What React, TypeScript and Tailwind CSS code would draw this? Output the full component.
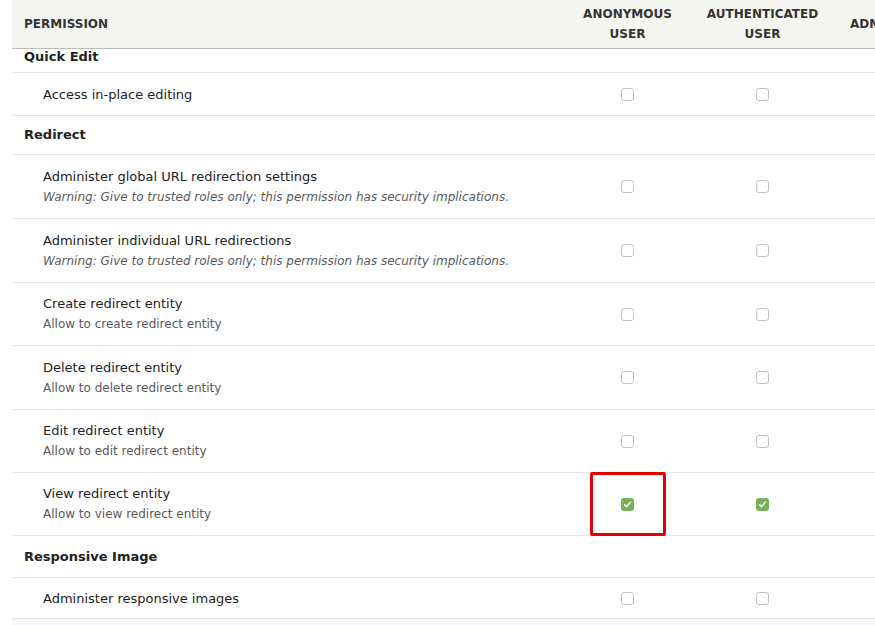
import React from "react";

type Row =
  | { kind: "module"; name: string; h: string; clip?: boolean }
  | { kind: "perm"; title: string; desc?: string; warn?: boolean; h: string; checked?: boolean };

const rows: Row[] = [
  { kind: "module", name: "Quick Edit", h: "h-[24px]", clip: true },
  { kind: "perm", title: "Access in-place editing", h: "h-[43px]" },
  { kind: "module", name: "Redirect", h: "h-[39px]" },
  {
    kind: "perm",
    title: "Administer global URL redirection settings",
    desc: "Warning: Give to trusted roles only; this permission has security implications.",
    warn: true,
    h: "h-[64px]",
  },
  {
    kind: "perm",
    title: "Administer individual URL redirections",
    desc: "Warning: Give to trusted roles only; this permission has security implications.",
    warn: true,
    h: "h-[64px]",
  },
  { kind: "perm", title: "Create redirect entity", desc: "Allow to create redirect entity", h: "h-[63px]" },
  { kind: "perm", title: "Delete redirect entity", desc: "Allow to delete redirect entity", h: "h-[64px]" },
  { kind: "perm", title: "Edit redirect entity", desc: "Allow to edit redirect entity", h: "h-[63px]" },
  { kind: "perm", title: "View redirect entity", desc: "Allow to view redirect entity", h: "h-[63px]", checked: true },
  { kind: "module", name: "Responsive Image", h: "h-[42px]" },
  { kind: "perm", title: "Administer responsive images", h: "h-[41px]" },
];

function Checkbox({ checked }: { checked?: boolean }) {
  if (checked) {
    return (
      <span className="flex h-[13px] w-[13px] items-center justify-center rounded-[3px] bg-[#77b259]">
        <svg width="9" height="9" viewBox="0 0 10 10" fill="none">
          <path d="M1.8 5.2 L4 7.4 L8.2 2.4" stroke="#fff" strokeWidth="1.6" strokeLinecap="round" strokeLinejoin="round" />
        </svg>
      </span>
    );
  }
  return <span className="block h-[13px] w-[13px] rounded-[3px] border border-[#c2c2c2] bg-white" />;
}

export default function App() {
  return (
    <div
      className="relative h-[625px] w-[875px] overflow-hidden bg-white text-[13px] text-[#333]"
      style={{ fontFamily: '"DejaVu Sans", Verdana, sans-serif' }}
    >
      <div className="ml-3 w-[1000px]">
        {/* header */}
        <div className="grid h-[49px] grid-cols-[548px_135px_135px_135px] items-center border-b border-[#bfbfba] bg-[#f5f5f2] text-[12px] font-bold uppercase leading-[20px] text-[#333]">
          <div className="pl-3">Permission</div>
          <div className="text-center">Anonymous<br />user</div>
          <div className="text-center">Authenticated<br />user</div>
          <div className="pl-5">Administrator</div>
        </div>

        {rows.map((row, i) =>
          row.kind === "module" ? (
            <div
              key={i}
              className={`flex overflow-hidden border-b border-[#e6e4df] pl-3 font-bold leading-[20px] text-[#222] ${row.h} ${
                row.clip ? "items-end pb-[5px]" : "items-center"
              }`}
            >
              {row.name}
            </div>
          ) : (
            <div key={i} className={`grid grid-cols-[548px_135px_135px_135px] items-center border-b border-[#e6e4df] ${row.h}`}>
              <div className="pl-[31px] leading-[21px]">
                <div className="text-[#222]">{row.title}</div>
                {row.desc && (
                  <div className={`text-[12px] text-[#595959] ${row.warn ? "italic" : ""}`}>{row.desc}</div>
                )}
              </div>
              <div className="flex justify-center">
                <Checkbox checked={row.checked} />
              </div>
              <div className="flex justify-center">
                <Checkbox checked={row.checked} />
              </div>
              <div />
            </div>
          )
        )}
        <div className="h-[20px] bg-[#f5f9fd]" />
      </div>

      {/* highlight annotation */}
      <div className="absolute left-[590px] top-[472px] h-[64px] w-[76px] rounded-[2px] border-[3px] border-[#e30000]" />
    </div>
  );
}
